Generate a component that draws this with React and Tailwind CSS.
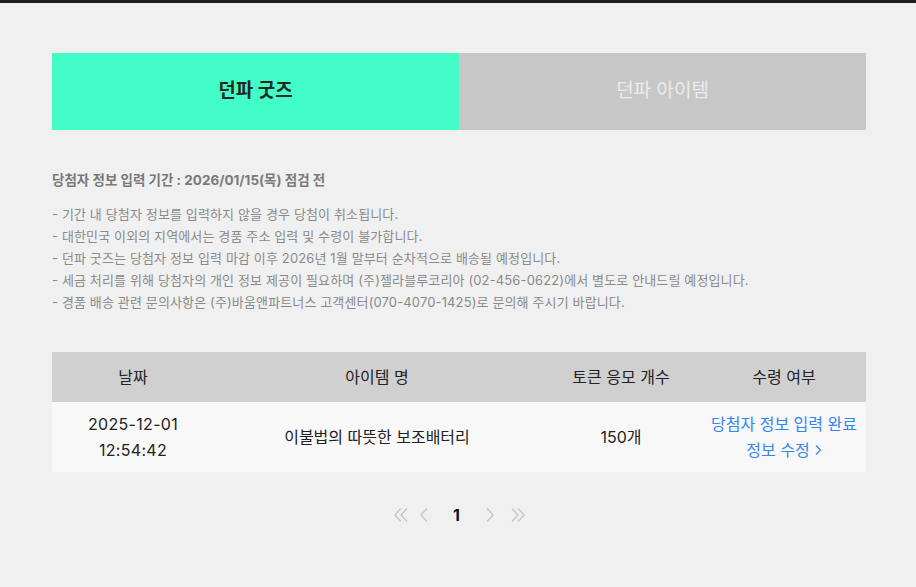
const FONT = { fontFamily: 'Inter, "Noto Sans CJK KR", sans-serif' };

const NOTES = [
  "- 기간 내 당첨자 정보를 입력하지 않을 경우 당첨이 취소됩니다.",
  "- 대한민국 이외의 지역에서는 경품 주소 입력 및 수령이 불가합니다.",
  "- 던파 굿즈는 당첨자 정보 입력 마감 이후 2026년 1월 말부터 순차적으로 배송될 예정입니다.",
  "- 세금 처리를 위해 당첨자의 개인 정보 제공이 필요하며 (주)젤라블루코리아 (02-456-0622)에서 별도로 안내드릴 예정입니다.",
  "- 경품 배송 관련 문의사항은 (주)바움앤파트너스 고객센터(070-4070-1425)로 문의해 주시기 바랍니다.",
];

function Chevron({ dir = "right", double = false }) {
  const r = dir === "right";
  return (
    <svg width={double ? 16 : 10} height="16" viewBox={double ? "0 0 16 16" : "0 0 10 16"} fill="none"
      stroke="#c8c8c8" strokeWidth="1.5" strokeLinejoin="miter">
      {double ? (
        r ? (<><path d="M2 1.5l6 6.5-6 6.5" /><path d="M8 1.5l6 6.5-6 6.5" /></>)
          : (<><path d="M14 1.5L8 8l6 6.5" /><path d="M8 1.5L2 8l6 6.5" /></>)
      ) : (
        <path d={r ? "M2 1.5l6 6.5-6 6.5" : "M8 1.5L2 8l6 6.5"} />
      )}
    </svg>
  );
}

export default function App() {
  return (
    <div className="min-h-[587px] bg-[#f0f0f0]" style={FONT}>
      <div className="h-[3px] bg-[#1c1c1c]" />

      <div className="pl-[52px] pr-[50px] pt-[50px]">
        {/* 탭 */}
        <div className="flex h-[77px]">
          <div className="flex-1 flex items-center justify-center bg-[#42fdc8] text-[19px] font-bold text-[#1f2a1c]">
            던파 굿즈
          </div>
          <div className="flex-1 flex items-center justify-center bg-[#c7c7c7] text-[19px] text-[#ececec]">
            던파 아이템
          </div>
        </div>

        {/* 안내 */}
        <div className="mt-[41px] text-[13.5px] font-bold text-[#7a7a7a] leading-[18px]">
          당첨자 정보 입력 기간 : 2026/01/15(목) 점검 전
        </div>
        <ul className="mt-[14px] text-[13px] tracking-[0.01em] text-[#8a8a8a] leading-[22px]">
          {NOTES.map((n) => <li key={n}>{n}</li>)}
        </ul>

        {/* 테이블 */}
        <div className="mt-[39px] text-[16px] text-[#222]">
          <div className="grid grid-cols-[162px_326px_162px_1fr] h-[50px] items-center bg-[#d0d0d0] text-center">
            <div>날짜</div>
            <div>아이템 명</div>
            <div>토큰 응모 개수</div>
            <div>수령 여부</div>
          </div>
          <div className="grid grid-cols-[162px_326px_162px_1fr] h-[70px] items-center bg-[#f8f8f8] text-center leading-[26px]">
            <div className="tracking-[0.02em]">2025-12-01<br />12:54:42</div>
            <div>이불법의 따뜻한 보조배터리</div>
            <div>150개</div>
            <div className="text-[#3584f0]">
              <div>당첨자 정보 입력 완료</div>
              <div className="flex items-center justify-center gap-[4px]">
                정보 수정
                <svg width="8" height="14" viewBox="0 0 8 14" fill="none" stroke="#3584f0" strokeWidth="1.3">
                  <path d="M2 2.5l4.5 4.5L2 11.5" />
                </svg>
              </div>
            </div>
          </div>
        </div>

        {/* 페이지네이션 */}
        <div className="mt-[35px] flex items-center justify-center">
          <Chevron dir="left" double />
          <span className="w-[10px]" />
          <Chevron dir="left" />
          <span className="w-[56px] text-center text-[16px] font-bold text-[#111] leading-[16px]">1</span>
          <Chevron dir="right" />
          <span className="w-[15px]" />
          <Chevron dir="right" double />
        </div>
      </div>
    </div>
  );
}
